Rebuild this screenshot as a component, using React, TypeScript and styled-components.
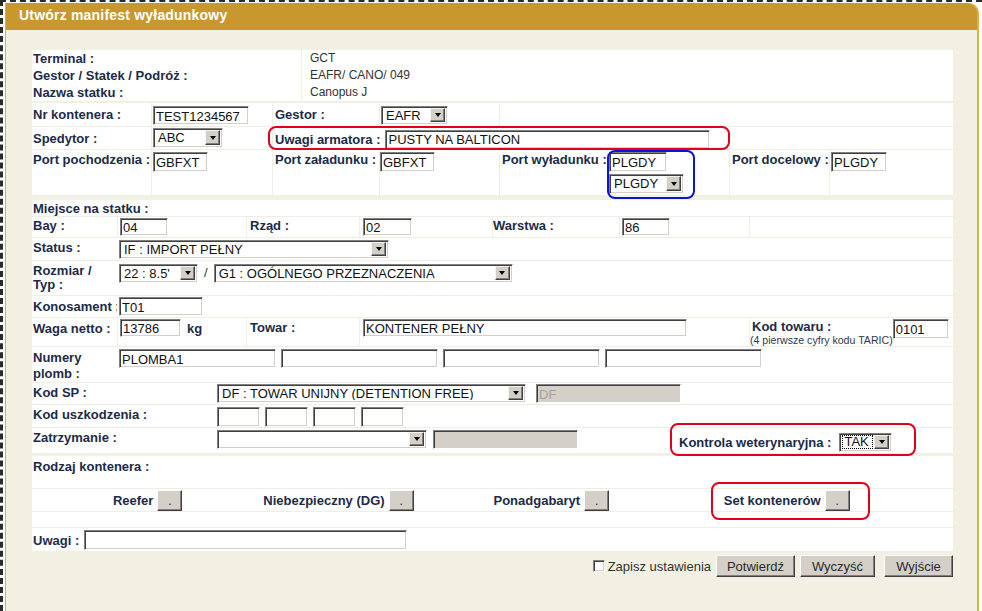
import React from "react";
import styled, { createGlobalStyle } from "styled-components";

const GlobalStyle = createGlobalStyle`
  html, body {
    margin: 0;
    padding: 0;
    background: #fff;
    overflow: hidden;
  }
  body {
    font-family: "Liberation Sans", Arial, sans-serif;
  }
  * {
    box-sizing: border-box;
  }
`;

const Frame = styled.div`
  width: 982px;
  height: 611px;
  border-top: 2px dashed #2b2b2b;
  border-left: 3px dashed #2b2b2b;
  padding: 1px 0 0 2px;
  background: #fff;
  overflow: hidden;
`;

const Panel = styled.div`
  width: 974px;
  height: 640px;
  border-left: 1px solid #dab24c;
  border-right: 2px solid #dab24c;
  border-top-right-radius: 10px;
  background: #f1f0e3;
`;

const Header = styled.div`
  height: 27px;
  background: #c8982f;
  border-top-right-radius: 9px;
  padding-left: 13px;
  color: #fff;
  font-weight: bold;
  font-size: 14px;
  letter-spacing: 0.2px;
  line-height: 25px;
`;

const Content = styled.div`
  padding: 20px 0 0 26px;
`;

const Table = styled.div`
  position: relative;
  width: 921px;
`;

const Block = styled.div<{ $mt?: number; $rowGap?: number }>`
  display: flex;
  flex-direction: column;
  gap: ${(p) => p.$rowGap ?? 1}px;
  margin-top: ${(p) => p.$mt ?? 0}px;
  background: #efeee3;
`;

const Row = styled.div<{ $cols: string; $h: number; $plain?: boolean }>`
  display: grid;
  grid-template-columns: ${(p) => p.$cols};
  column-gap: ${(p) => (p.$plain ? 0 : 1)}px;
  height: ${(p) => p.$h}px;
  background: ${(p) => (p.$plain ? "#fff" : "#efeee3")};
`;

const Cell = styled.div<{
  $pl?: number;
  $pt?: number;
  $span?: string;
  $ai?: string;
  $jc?: string;
  $gap?: number;
  $col?: boolean;
}>`
  background: #fff;
  display: flex;
  flex-direction: ${(p) => (p.$col ? "column" : "row")};
  align-items: ${(p) => p.$ai ?? "flex-start"};
  justify-content: ${(p) => p.$jc ?? "flex-start"};
  gap: ${(p) => p.$gap ?? 0}px;
  padding: ${(p) => p.$pt ?? 3}px 0 0 ${(p) => p.$pl ?? 1}px;
  grid-column: ${(p) => p.$span ?? "auto"};
  min-width: 0;
`;

const Label = styled.span<{ $lh?: number }>`
  display: block;
  font-weight: bold;
  font-size: 13px;
  line-height: ${(p) => p.$lh ?? 15}px;
  color: #1c2b47;
  white-space: nowrap;
`;

const Value = styled.span`
  font-size: 12px;
  line-height: 17px;
  color: #333;
  white-space: nowrap;
`;

const Hint = styled.span`
  display: block;
  font-size: 10.6px;
  line-height: 12px;
  color: #2f3a4c;
  white-space: nowrap;
`;

const TextBox = styled.input<{ $w: number; $h?: number; $off?: boolean }>`
  width: ${(p) => p.$w}px;
  height: ${(p) => p.$h ?? 19}px;
  flex: none;
  margin: 0;
  padding: 1px 2px 0;
  font-family: "Liberation Sans", Arial, sans-serif;
  font-size: 13px;
  color: ${(p) => (p.$off ? "#a3a29c" : "#111")};
  background: ${(p) => (p.$off ? "#d4d0c8" : "#fff")};
  border: 1px solid;
  border-color: #808080 #fff #fff #808080;
  box-shadow: inset 1px 1px 0 #404040, inset -1px -1px 0 #d4d0c8;
  outline: none;
`;

const SelectBox = styled.div<{ $w: number; $h?: number }>`
  width: ${(p) => p.$w}px;
  height: ${(p) => p.$h ?? 19}px;
  flex: none;
  display: flex;
  align-items: stretch;
  padding: 1px 2px 2px 2px;
  background: #fff;
  border: 1px solid;
  border-color: #808080 #fff #fff #808080;
  box-shadow: inset 1px 1px 0 #404040, inset -1px -1px 0 #d4d0c8;
`;

const SelectText = styled.span<{ $focus?: boolean }>`
  flex: 1;
  display: flex;
  align-items: center;
  padding-left: 2px;
  font-size: 13px;
  line-height: 15px;
  color: #111;
  white-space: nowrap;
  overflow: hidden;
  outline: ${(p) => (p.$focus ? "1px dotted #000" : "none")};
  outline-offset: -1px;
  margin-right: 1px;
`;

const Arrow = styled.span`
  width: 15px;
  flex: none;
  display: flex;
  align-items: center;
  justify-content: center;
  background: #d4d0c8;
  border: 1px solid;
  border-color: #f4f3ee #404040 #404040 #f4f3ee;
  box-shadow: inset -1px -1px 0 #808080;

  &::after {
    content: "";
    border-left: 3.5px solid transparent;
    border-right: 3.5px solid transparent;
    border-top: 4px solid #000;
  }
`;

const Btn = styled.button<{ $w?: number; $ml?: number }>`
  width: ${(p) => (p.$w ? `${p.$w}px` : "auto")};
  height: 22px;
  margin: 0 0 0 ${(p) => p.$ml ?? 0}px;
  padding: 0 6px;
  font-family: "Liberation Sans", Arial, sans-serif;
  font-size: 13px;
  font-weight: normal;
  color: #2a2a2a;
  background: #d4d0c8;
  border: 1px solid;
  border-color: #fff #404040 #404040 #fff;
  box-shadow: inset -1px -1px 0 #808080;
`;

const DotBtn = styled(Btn)`
  width: 25px;
  height: 21px;
  padding: 0;
  font-size: 12px;
  line-height: 20px;
`;

const Unit = styled.span`
  margin-left: 6px;
  font-weight: bold;
  font-size: 13px;
  line-height: 19px;
  color: #1c2b47;
`;

const Slash = styled.span`
  margin: 0 6px;
  font-size: 13px;
  line-height: 18px;
  color: #333;
`;

const Footer = styled.div`
  width: 921px;
  margin-top: 4px;
  display: flex;
  justify-content: flex-end;
  align-items: center;
  gap: 5px;
`;

const Check = styled.label`
  display: flex;
  align-items: center;
  gap: 3px;
  font-size: 13px;
  color: #333;
`;

const Box = styled.span`
  width: 12px;
  height: 12px;
  background: #fff;
  border: 1px solid;
  border-color: #808080 #fff #fff #808080;
  box-shadow: inset 1px 1px 0 #404040, inset -1px -1px 0 #d4d0c8;
`;

const Mark = styled.div<{ $x: number; $y: number; $w: number; $h: number; $blue?: boolean }>`
  position: absolute;
  left: ${(p) => p.$x}px;
  top: ${(p) => p.$y}px;
  width: ${(p) => p.$w}px;
  height: ${(p) => p.$h}px;
  border: 2px solid ${(p) => (p.$blue ? "#0a14d6" : "#e0001c")};
  border-radius: 8px;
  pointer-events: none;
`;

function Select({ w, h, text, focus }: { w: number; h?: number; text: string; focus?: boolean }) {
  return (
    <SelectBox $w={w} $h={h}>
      <SelectText $focus={focus}>{text}</SelectText>
      <Arrow />
    </SelectBox>
  );
}

const G2 = "119px 120px 106px 119px 107px 121px 99px 1fr";
const G3 = "85px 128px 112px 132px 126px 129px 1fr";

export default function App() {
  return (
    <Frame>
      <GlobalStyle />
      <Panel>
        <Header>Utwórz manifest wyładunkowy</Header>
        <Content>
          <Table>
            <Block $rowGap={0}>
              <Row $cols="269px 1fr" $h={17}>
                <Cell $pt={1}>
                  <Label>Terminal :</Label>
                </Cell>
                <Cell $pt={0} $pl={8}>
                  <Value>GCT</Value>
                </Cell>
              </Row>
              <Row $cols="269px 1fr" $h={17}>
                <Cell $pt={1}>
                  <Label>Gestor / Statek / Podróż :</Label>
                </Cell>
                <Cell $pt={0} $pl={8}>
                  <Value>EAFR/ CANO/ 049</Value>
                </Cell>
              </Row>
              <Row $cols="269px 1fr" $h={17}>
                <Cell $pt={1}>
                  <Label>Nazwa statku :</Label>
                </Cell>
                <Cell $pt={0} $pl={8}>
                  <Value>Canopus J</Value>
                </Cell>
              </Row>
            </Block>

            <Block $mt={2}>
              <Row $cols={G2} $h={23}>
                <Cell $pt={4}>
                  <Label>Nr kontenera :</Label>
                </Cell>
                <Cell $pt={3} $pl={1}>
                  <TextBox $w={96} defaultValue="TEST1234567" />
                </Cell>
                <Cell $pt={4} $pl={2}>
                  <Label>Gestor :</Label>
                </Cell>
                <Cell $pt={3} $pl={1}>
                  <Select w={67} text="EAFR" />
                </Cell>
                <Cell $span="5 / 9" />
              </Row>
              <Row $cols={G2} $h={22}>
                <Cell $pt={4}>
                  <Label>Spedytor :</Label>
                </Cell>
                <Cell $pt={1} $pl={1}>
                  <Select w={70} h={20} text="ABC" />
                </Cell>
                <Cell $span="3 / 7" $pl={2} $pt={2} $ai="center" $gap={5}>
                  <Label>Uwagi armatora :</Label>
                  <TextBox $w={325} defaultValue="PUSTY NA BALTICON" />
                </Cell>
                <Cell $span="7 / 9" />
              </Row>
              <Row $cols={G2} $h={45}>
                <Cell $pt={2}>
                  <Label>Port pochodzenia :</Label>
                </Cell>
                <Cell $pt={2} $pl={1}>
                  <TextBox $w={55} $h={20} defaultValue="GBFXT" />
                </Cell>
                <Cell $pt={2} $pl={2}>
                  <Label>Port załadunku :</Label>
                </Cell>
                <Cell $pt={2} $pl={0}>
                  <TextBox $w={55} $h={20} defaultValue="GBFXT" />
                </Cell>
                <Cell $pt={2} $pl={2}>
                  <Label>Port wyładunku :</Label>
                </Cell>
                <Cell $pt={2} $pl={1} $col $gap={2}>
                  <TextBox $w={58} $h={20} defaultValue="PLGDY" />
                  <Select w={75} h={20} text="PLGDY" />
                </Cell>
                <Cell $pt={2} $pl={2}>
                  <Label>Port docelowy :</Label>
                </Cell>
                <Cell $pt={2} $pl={1}>
                  <TextBox $w={56} $h={20} defaultValue="PLGDY" />
                </Cell>
              </Row>
            </Block>

            <Block $mt={5}>
              <Row $cols={G3} $h={16}>
                <Cell $span="1 / 8" $pt={1}>
                  <Label>Miejsce na statku :</Label>
                </Cell>
              </Row>
              <Row $cols={G3} $h={20}>
                <Cell $pt={1}>
                  <Label>Bay :</Label>
                </Cell>
                <Cell $pt={1} $pl={2}>
                  <TextBox $w={48} $h={18} defaultValue="04" />
                </Cell>
                <Cell $pt={1} $pl={3}>
                  <Label>Rząd :</Label>
                </Cell>
                <Cell $pt={1} $pl={3}>
                  <TextBox $w={49} $h={18} defaultValue="02" />
                </Cell>
                <Cell $pt={1} $pl={0}>
                  <Label>Warstwa :</Label>
                </Cell>
                <Cell $pt={1} $pl={2}>
                  <TextBox $w={48} $h={18} defaultValue="86" />
                </Cell>
                <Cell />
              </Row>
              <Row $cols={G3} $h={22} $plain>
                <Cell $pt={2}>
                  <Label>Status :</Label>
                </Cell>
                <Cell $span="2 / 8" $pt={2} $pl={2}>
                  <Select w={270} h={19} text="IF : IMPORT PEŁNY" />
                </Cell>
              </Row>
              <Row $cols={G3} $h={34} $plain>
                <Cell $pt={3}>
                  <Label $lh={14}>
                    Rozmiar /
                    <br />
                    Typ :
                  </Label>
                </Cell>
                <Cell $span="2 / 8" $pt={3} $pl={2}>
                  <Select w={79} h={19} text="22 : 8.5'" />
                  <Slash>/</Slash>
                  <Select w={299} h={19} text="G1 : OGÓLNEGO PRZEZNACZENIA" />
                </Cell>
              </Row>
              <Row $cols={G3} $h={21} $plain>
                <Cell $pt={3}>
                  <Label>Konosament :</Label>
                </Cell>
                <Cell $span="2 / 8" $pt={1} $pl={2}>
                  <TextBox $w={84} defaultValue="T01" />
                </Cell>
              </Row>
              <Row $cols={G3} $h={28}>
                <Cell $pt={3}>
                  <Label>Waga netto :</Label>
                </Cell>
                <Cell $pt={1} $pl={2}>
                  <TextBox $w={61} $h={18} defaultValue="13786" />
                  <Unit>kg</Unit>
                </Cell>
                <Cell $pt={2} $pl={3}>
                  <Label>Towar :</Label>
                </Cell>
                <Cell $span="4 / 7" $pt={1} $pl={3}>
                  <TextBox $w={324} $h={18} defaultValue="KONTENER PEŁNY" />
                </Cell>
                <Cell $pt={1} $pl={0}>
                  <div>
                    <Label style={{ paddingLeft: 2 }}>Kod towaru :</Label>
                    <Hint>(4 pierwsze cyfry kodu TARIC)</Hint>
                  </div>
                  <TextBox $w={56} $h={20} defaultValue="0101" />
                </Cell>
              </Row>
              <Row $cols={G3} $h={34} $plain>
                <Cell $pt={3}>
                  <Label $lh={16}>
                    Numery
                    <br />
                    plomb :
                  </Label>
                </Cell>
                <Cell $span="2 / 8" $pt={2} $pl={2} $gap={5}>
                  <TextBox $w={157} defaultValue="PLOMBA1" />
                  <TextBox $w={157} defaultValue="" />
                  <TextBox $w={157} defaultValue="" />
                  <TextBox $w={157} defaultValue="" />
                </Cell>
              </Row>
            </Block>

            <Block $mt={2}>
              <Row $cols="184px 1fr" $h={21} $plain>
                <Cell $pt={2}>
                  <Label>Kod SP :</Label>
                </Cell>
                <Cell $pt={1} $pl={1} $gap={10}>
                  <Select w={309} text="DF : TOWAR UNIJNY (DETENTION FREE)" />
                  <TextBox $w={145} $off defaultValue="DF" />
                </Cell>
              </Row>
              <Row $cols="184px 1fr" $h={22} $plain>
                <Cell $pt={2}>
                  <Label>Kod uszkodzenia :</Label>
                </Cell>
                <Cell $pt={2} $pl={1} $gap={5}>
                  <TextBox $w={43} $h={20} defaultValue="" />
                  <TextBox $w={43} $h={20} defaultValue="" />
                  <TextBox $w={43} $h={20} defaultValue="" />
                  <TextBox $w={43} $h={20} defaultValue="" />
                </Cell>
              </Row>
              <Row $cols="184px 454px 1fr" $h={25} $plain>
                <Cell $pt={2}>
                  <Label>Zatrzymanie :</Label>
                </Cell>
                <Cell $pt={2} $pl={1} $gap={6}>
                  <Select w={210} text="" />
                  <TextBox $w={145} $off defaultValue="" />
                </Cell>
                <Cell $pt={3} $pl={9} $ai="center" $gap={8}>
                  <Label>Kontrola weterynaryjna :</Label>
                  <Select w={53} h={19} text="TAK" focus />
                </Cell>
              </Row>
            </Block>

            <Block $mt={3}>
              <Row $cols="1fr" $h={32} $plain>
                <Cell $pt={3}>
                  <Label>Rodzaj kontenera :</Label>
                </Cell>
              </Row>
              <Row $cols="repeat(4, 1fr)" $h={22} $plain>
                <Cell $pt={1} $ai="center" $jc="center" $gap={4}>
                  <Label>Reefer</Label>
                  <DotBtn>.</DotBtn>
                </Cell>
                <Cell $pt={1} $ai="center" $gap={4}>
                  <Label>Niebezpieczny (DG)</Label>
                  <DotBtn>.</DotBtn>
                </Cell>
                <Cell $pt={1} $ai="center" $gap={4}>
                  <Label>Ponadgabaryt</Label>
                  <DotBtn>.</DotBtn>
                </Cell>
                <Cell $pt={1} $ai="center" $gap={4}>
                  <Label>Set kontenerów</Label>
                  <DotBtn>.</DotBtn>
                </Cell>
              </Row>
              <Row $cols="1fr" $h={15} $plain>
                <Cell />
              </Row>
              <Row $cols="1fr" $h={23} $plain>
                <Cell $pt={1} $ai="center" $gap={5}>
                  <Label>Uwagi :</Label>
                  <TextBox $w={323} $h={20} defaultValue="" />
                </Cell>
              </Row>
            </Block>

            <Mark $x={236} $y={76} $w={462} $h={24} />
            <Mark $x={575} $y={100} $w={88} $h={49} $blue />
            <Mark $x={638} $y={373} $w={246} $h={33} />
            <Mark $x={679} $y={432} $w={159} $h={38} />
          </Table>

          <Footer>
            <Check>
              <Box />
              Zapisz ustawienia
            </Check>
            <Btn $w={79}>Potwierdź</Btn>
            <Btn $w={75}>Wyczyść</Btn>
            <Btn $w={69} $ml={4}>
              Wyjście
            </Btn>
          </Footer>
        </Content>
      </Panel>
    </Frame>
  );
}
